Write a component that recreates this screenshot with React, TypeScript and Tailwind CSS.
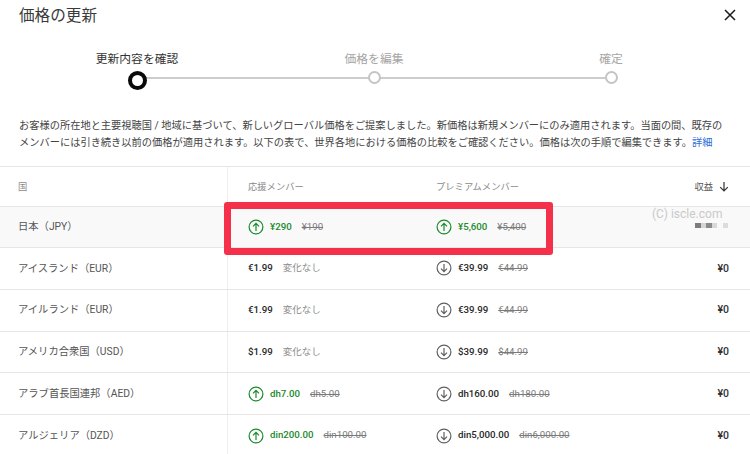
const font = { fontFamily: '"Roboto", "Noto Sans CJK JP", sans-serif' }

type Price = { now: string; old?: string; dir?: 'up' | 'down' }
type Row = { name: string; fan: Price; premium: Price; revenue?: string }

const rows: Row[] = [
  { name: 'アイスランド（EUR）', fan: { now: '€1.99' }, premium: { now: '€39.99', old: '€44.99', dir: 'down' }, revenue: '¥0' },
  { name: 'アイルランド（EUR）', fan: { now: '€1.99' }, premium: { now: '€39.99', old: '€44.99', dir: 'down' }, revenue: '¥0' },
  { name: 'アメリカ合衆国（USD）', fan: { now: '$1.99' }, premium: { now: '$39.99', old: '$44.99', dir: 'down' }, revenue: '¥0' },
  { name: 'アラブ首長国連邦（AED）', fan: { now: 'dh7.00', old: 'dh5.00', dir: 'up' }, premium: { now: 'dh160.00', old: 'dh180.00', dir: 'down' }, revenue: '¥0' },
  { name: 'アルジェリア（DZD）', fan: { now: 'din200.00', old: 'din100.00', dir: 'up' }, premium: { now: 'din5,000.00', old: 'din6,000.00', dir: 'down' }, revenue: '¥0' },
]

function ArrowCircle({ dir }: { dir: 'up' | 'down' }) {
  const color = dir === 'up' ? '#1b8a2c' : '#606060'
  return (
    <svg width="16" height="16" viewBox="0 0 16 16" fill="none" stroke={color} strokeWidth="1.2" className="shrink-0">
      <circle cx="8" cy="8" r="6.9" />
      {dir === 'up'
        ? <path d="M8 12V4.6M5 7.4l3-3 3 3" />
        : <path d="M8 4v7.4M5 8.6l3 3 3-3" />}
    </svg>
  )
}

function PriceCell({ price }: { price: Price }) {
  const up = price.dir === 'up'
  return (
    <div className="flex items-center text-[9.7px] font-medium">
      {price.dir && <span className="mr-[6px]"><ArrowCircle dir={price.dir} /></span>}
      <span className={up ? 'text-[#1b8a2c]' : 'text-[#282828]'}>{price.now}</span>
      {price.old
        ? <span className="ml-[10px] font-normal text-[#7a7a7a] line-through">{price.old}</span>
        : <span className="ml-[10px] text-[9.5px] font-normal text-[#8c8c8c]">変化なし</span>}
    </div>
  )
}

function Step({ label, active }: { label: string; active?: boolean }) {
  return (
    <div className="flex w-[100px] flex-col items-center">
      <span className={`text-[11.8px] leading-[16px] ${active ? 'text-[#333333]' : 'text-[#a5a5a5]'}`}>{label}</span>
      <span
        className={`z-10 mt-[4px] rounded-full bg-white ${active
          ? 'h-[19px] w-[19px] border-[4.5px] border-[#0a0a0a]'
          : 'my-[7px] h-[13px] w-[13px] border-[2.5px] border-[#c4c4c4]'}`}
      />
    </div>
  )
}

export default function App() {
  return (
    <div className="relative h-[454px] w-[750px] overflow-hidden bg-white text-[#333333]" style={font}>
      <div className="flex items-start justify-between pl-[19px] pr-[13px] pt-[4px]">
        <h1 className="text-[15.6px] leading-[24px] text-[#3a3a3a]">価格の更新</h1>
        <svg width="14" height="14" viewBox="0 0 14 14" fill="none" stroke="#1a1a1a" strokeWidth="1.5" className="mt-[4px]">
          <path d="M2 2l10 10M12 2L2 12" />
        </svg>
      </div>

      <div className="relative mt-[23px] flex justify-between pl-[87px] pr-[89px]">
        <Step label="更新内容を確認" active />
        <Step label="価格を編集" />
        <Step label="確定" />
        <div className="absolute left-[146px] top-[26px] h-[2px] w-[460px] bg-[#cccccc]" />
      </div>

      <p className="mt-[26px] pl-[19px] pr-[19px] text-[10.24px] leading-[17px] text-[#444444]">
        お客様の所在地と主要視聴国 / 地域に基づいて、新しいグローバル価格をご提案しました。新価格は新規メンバーにのみ適用されます。当面の間、既存のメンバーには引き続き以前の価格が適用されます。以下の表で、世界各地における価格の比較をご確認ください。価格は次の手順で編集できます。<span className="text-[#2a6fd6]">詳細</span>
      </p>

      <div className="absolute inset-x-0 top-[166px]">
        <div className="grid h-[41px] grid-cols-[228px_208px_1fr_auto] items-center border-y border-[#e6e6e6] text-[9.3px] text-[#8a8a8a]">
          <div className="flex h-full items-center border-r border-[#eeeeee] pl-[18px]">国</div>
          <div className="pl-5">応援メンバー</div>
          <div>プレミアムメンバー</div>
          <div className="flex items-center gap-[6px] pr-[21px] text-[#555555]">
            収益
            <svg width="10" height="11" viewBox="0 0 10 11" fill="none" stroke="#333333" strokeWidth="1.2">
              <path d="M5 1v9M1.2 6.2L5 10l3.8-3.8" />
            </svg>
          </div>
        </div>

        <div className="grid h-[41px] grid-cols-[228px_208px_1fr_auto] items-center border-b border-[#e6e6e6] bg-[#f9f9f9]">
          <div className="flex h-full items-center border-r border-[#eeeeee] pl-[18px] text-[10.3px] text-[#555555]">日本（JPY）</div>
          <div className="pl-5"><PriceCell price={{ now: '¥290', old: '¥190', dir: 'up' }} /></div>
          <div><PriceCell price={{ now: '¥5,600', old: '¥5,400', dir: 'up' }} /></div>
          <div className="flex pr-[22px] pb-[3px]">
            <span className="h-[5px] w-[5.5px] bg-[#7d7d7d]" />
            <span className="h-[5px] w-[5.5px] bg-[#d5d5d5]" />
            <span className="h-[5px] w-[5.5px] bg-[#8a8a8a]" />
            <span className="h-[5px] w-[5.5px] bg-[#d8d8d8]" />
            <span className="h-[5px] w-[5.5px] bg-[#f9f9f9]" />
            <span className="h-[5px] w-[5.5px] bg-[#dcdcdc]" />
          </div>
        </div>

        {rows.map(row => (
          <div key={row.name} className="grid h-[41.8px] grid-cols-[228px_208px_1fr_auto] items-center border-b border-[#e6e6e6]">
            <div className="flex h-full items-center border-r border-[#eeeeee] pl-[18px] text-[10.3px] text-[#555555]">{row.name}</div>
            <div className="pl-5"><PriceCell price={row.fan} /></div>
            <div><PriceCell price={row.premium} /></div>
            <div className="pr-[21px] text-[10.5px] font-medium text-[#333333]">{row.revenue}</div>
          </div>
        ))}
      </div>

      {/* 赤枠とウォーターマークは表の上に重ねる */}
      <div className="absolute left-[224px] top-[202px] h-[53px] w-[329px] rounded-[3px] border-[7px] border-[#f5304a]" />
      <div className="absolute left-[652px] top-[206px] text-[12px] leading-[16px] text-[#c9c9c9]">(C) iscle.com</div>
    </div>
  )
}
